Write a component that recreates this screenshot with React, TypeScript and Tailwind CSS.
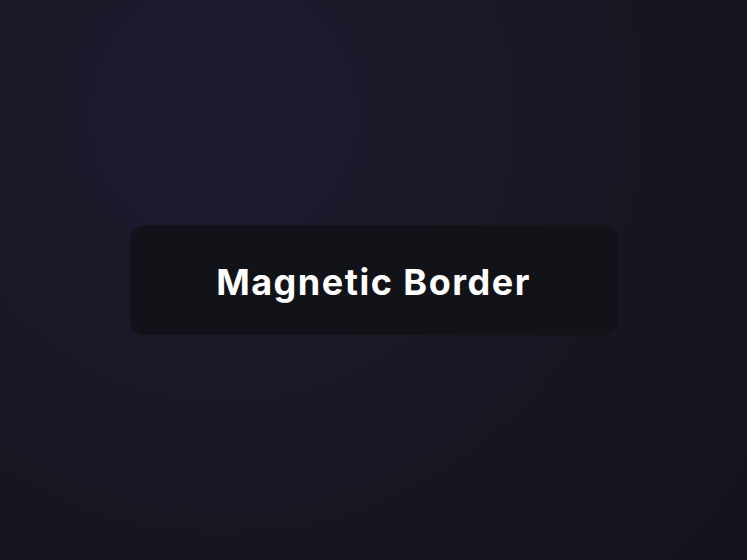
export default function App() {
  return (
    <div
      className="w-[747px] h-[560px] flex items-center justify-center bg-[radial-gradient(circle_at_30%_20%,#1d1b2f_0%,#191827_40%,#15151e_75%,#14141c_100%)]"
      style={{ fontFamily: "Inter, 'Noto Sans', sans-serif" }}
    >
      <div className="w-[488px] h-[110px] rounded-2xl bg-[#121318] flex items-center justify-center pt-[4px]">
        <span className="text-[36px] font-bold text-white tracking-[1.5px] leading-none">Magnetic Border</span>
      </div>
    </div>
  );
}
